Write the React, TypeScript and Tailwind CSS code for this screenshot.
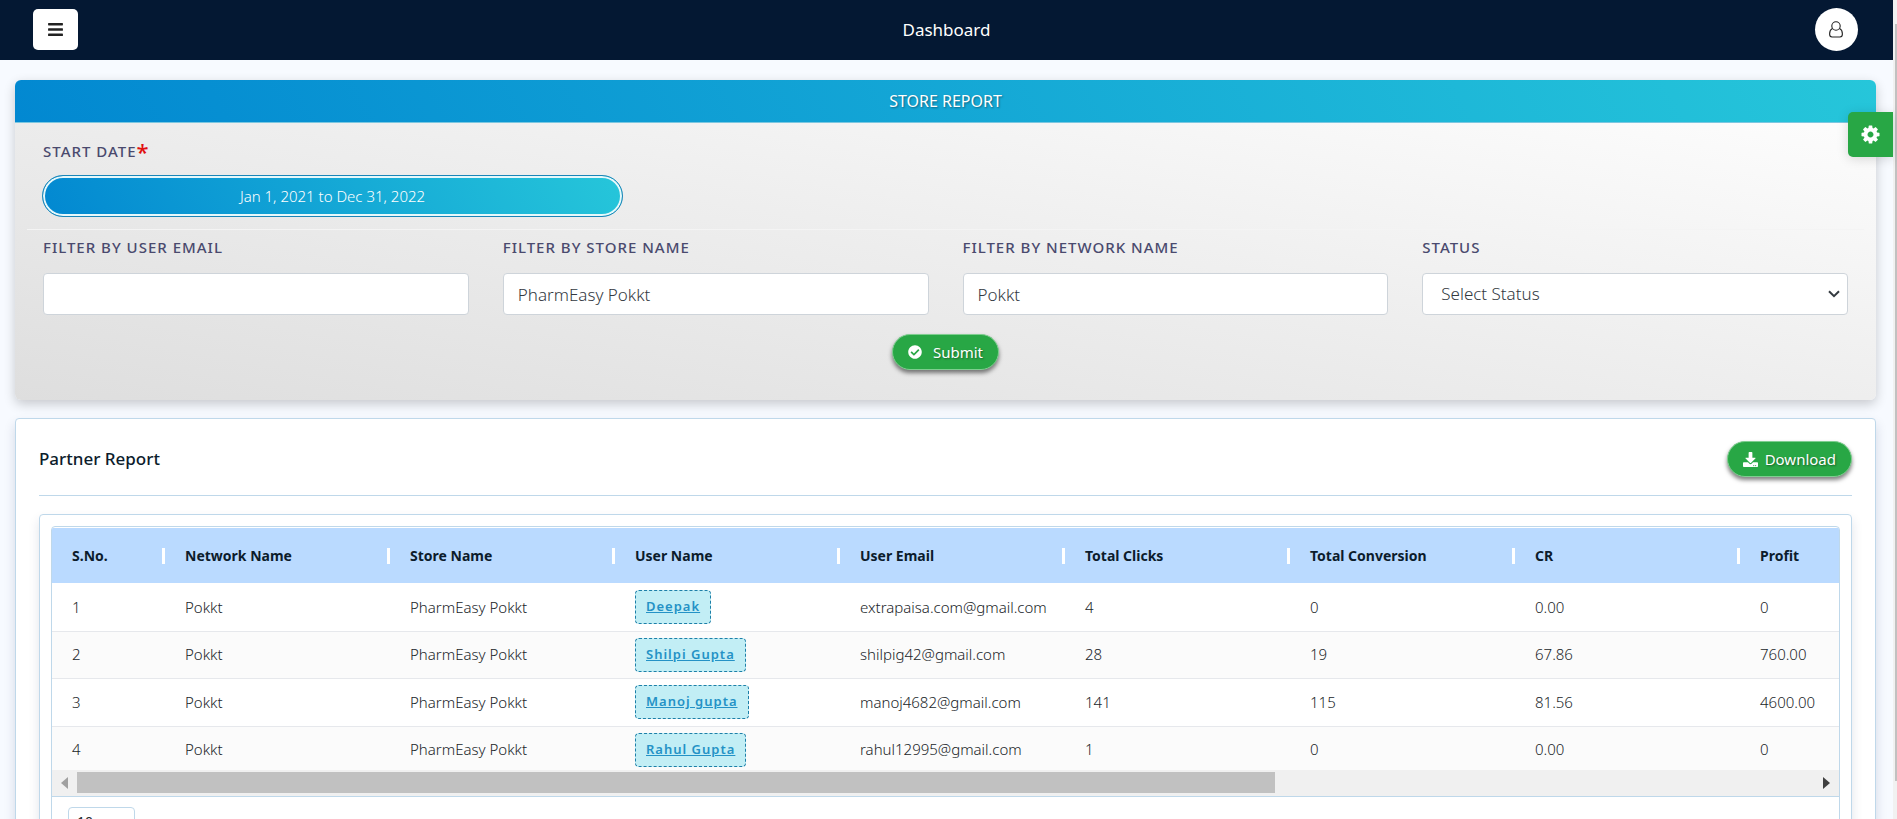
import React from "react";
import { FaBars, FaCheckCircle, FaDownload } from "react-icons/fa";

const label = "flex items-center h-6 text-[15px] font-medium tracking-[1px] uppercase text-[#4a4a6e]";
const field =
  "block w-full h-[42px] rounded border border-[#ced4da] bg-white px-[14px] text-[17px] font-light text-[#33393f] outline-none";
const greenButton =
  "flex items-center h-9 rounded-full border border-[#7fce90] bg-[#28a745] text-[15px] text-white shadow-[0_3px_4px_rgba(0,0,0,0.5)] [text-shadow:1px_1px_2px_rgba(0,0,0,0.4)]";

const columns = [
  "S.No.",
  "Network Name",
  "Store Name",
  "User Name",
  "User Email",
  "Total Clicks",
  "Total Conversion",
  "CR",
  "Profit",
];

const rows = [
  ["1", "Pokkt", "PharmEasy Pokkt", "Deepak", "extrapaisa.com@gmail.com", "4", "0", "0.00", "0"],
  ["2", "Pokkt", "PharmEasy Pokkt", "Shilpi Gupta", "shilpig42@gmail.com", "28", "19", "67.86", "760.00"],
  ["3", "Pokkt", "PharmEasy Pokkt", "Manoj gupta", "manoj4682@gmail.com", "141", "115", "81.56", "4600.00"],
  ["4", "Pokkt", "PharmEasy Pokkt", "Rahul Gupta", "rahul12995@gmail.com", "1", "0", "0.00", "0"],
];

function UserIcon() {
  return (
    <svg width="14" height="17" viewBox="0 0 14 17" fill="none" stroke="#222" strokeWidth="1.1">
      <circle cx="7" cy="5" r="4.2" />
      <path d="M3.4 7.6C1.4 8.6.6 10.8.6 13c0 2 .9 3 2.4 3h8c1.500 0 2.400-1 2.400-3 0-2.200-.8-4.400-2.800-5.400" />
    </svg>
  );
}

function GearIcon() {
  return (
    <svg width="21" height="21" viewBox="0 0 1792 1792" fill="currentColor">
      <path d="M1152 896q0-106-75-181t-181-75-181 75-75 181 75 181 181 75 181-75 75-181zm512-109v222q0 12-8 23t-20 13l-185 28q-19 54-39 91 35 50 107 138 10 12 10 25t-9 23q-27 37-99 108t-94 71q-12 0-26-9l-138-108q-44 23-91 38-16 136-29 186-7 28-36 28h-222q-14 0-24.500-8.500t-11.500-21.500l-28-184q-49-16-90-37l-141 107q-10 9-25 9-14 0-25-11-126-114-165-168-7-10-7-23 0-12 8-23 15-21 51-66.500t54-70.500q-27-50-41-99l-183-27q-13-2-21-12.500t-8-23.500v-222q0-12 8-23t19-13l186-28q14-46 39-92-40-57-107-138-10-12-10-24 0-10 9-23 26-36 98.500-107.500t94.500-71.500q13 0 26 10l138 107q44-23 91-38 16-136 29-186 7-28 36-28h222q14 0 24.500 8.500t11.500 21.500l28 184q49 16 90 37l142-107q9-9 24-9 13 0 25 10 129 119 165 170 7 8 7 22 0 12-8 23-15 21-51 66.500t-54 70.500q26 50 41 98l183 28q13 2 21 12.500t8 23.500z" />
    </svg>
  );
}

function TopBar() {
  return (
    <header className="flex h-[60px] items-center justify-between bg-[#041833] pb-px pl-[33px] pr-[35px]">
      <button
        aria-label="Toggle menu"
        className="flex h-[41px] w-[45px] items-center justify-center rounded-[5px] bg-white text-[#222]"
      >
        <FaBars size={17} />
      </button>
      <h1 className="text-[17px] text-white">Dashboard</h1>
      <button aria-label="Account" className="flex h-[43px] w-[43px] items-center justify-center rounded-full bg-white">
        <UserIcon />
      </button>
    </header>
  );
}

function Filters() {
  return (
    <section className="rounded-[6px] bg-[linear-gradient(to_top_right,#dedede_0%,#eeeeee_50%,#ffffff_100%)] shadow-[0_4px_12px_rgba(0,0,0,0.2)]">
      <h2 className="flex h-[43px] items-center justify-center rounded-t-[6px] border-b border-[#7cc7e0] bg-[linear-gradient(60deg,#0288d1,#26c6da)] text-[16px] text-white [text-shadow:1px_1px_2px_rgba(0,0,0,0.4)]">
        STORE REPORT
      </h2>
      <form className="px-7 pb-[30px] pt-4" onSubmit={(e) => e.preventDefault()}>
        <label htmlFor="range" className={label}>
          Start Date<span className="text-[22px] leading-4 text-[#e01010]">*</span>
        </label>
        <button
          id="range"
          type="button"
          className="-ml-px mt-3 block h-[42px] w-[581px] max-w-full rounded-full border border-[#1a86b8] bg-[linear-gradient(60deg,#0288d1,#26c6da)] text-[15px] font-light text-white shadow-[inset_0_0_0_2px_#e6f8fb]"
        >
          Jan 1, 2021 to Dec 31, 2022
        </button>
        <hr className="-mx-4 mt-3 border-[#f4f4f4]" />
        <div className="grid grid-cols-4 gap-x-[34px] pt-[5px]">
          <div>
            <label htmlFor="email" className={label}>Filter by User Email</label>
            <input id="email" className={`${field} mt-[14px]`} />
          </div>
          <div>
            <label htmlFor="store" className={label}>Filter by Store Name</label>
            <input id="store" defaultValue="PharmEasy Pokkt" className={`${field} mt-[14px]`} />
          </div>
          <div>
            <label htmlFor="network" className={label}>Filter by Network Name</label>
            <input id="network" defaultValue="Pokkt" className={`${field} mt-[14px]`} />
          </div>
          <div>
            <label htmlFor="status" className={label}>Status</label>
            <div className="relative mt-[14px]">
              <select id="status" className={`${field} appearance-none pl-[18px]`}>
                <option>Select Status</option>
              </select>
              <svg className="pointer-events-none absolute right-2 top-[17px]" width="12" height="8" viewBox="0 0 12 8" fill="none" stroke="#343a40" strokeWidth="2">
                <path d="M1 1.200l5 5 5-5" />
              </svg>
            </div>
          </div>
        </div>
        <div className="flex justify-center pt-[19px]">
          <button type="submit" className={`${greenButton} gap-[11px] px-[15px]`}>
            <FaCheckCircle size={14} />
            Submit
          </button>
        </div>
      </form>
    </section>
  );
}

function ReportTable() {
  return (
    <div className="overflow-hidden rounded-t border border-[#bfd8ea] bg-white pt-px">
      <div className="overflow-hidden">
        <table className="w-[2655px] table-fixed border-collapse text-left text-[15px] text-[#212529]">
          <colgroup>
            <col className="w-[113px]" />
            {columns.slice(1).map((c) => (
              <col key={c} className="w-[225px]" />
            ))}
            <col />
          </colgroup>
          <thead className="bg-[#badaff] text-[14px] text-[#0c1c2c]">
            <tr className="h-[55px]">
              {columns.map((c) => (
                <th key={c} className="p-0 font-bold">
                  <div className="flex items-center justify-between pl-5">
                    {c}
                    <span className="h-4 w-[3px] bg-white" />
                  </div>
                </th>
              ))}
              <th />
            </tr>
          </thead>
          <tbody>
            {rows.map((r, i) => (
              <tr
                key={r[0]}
                className={`border-b border-[#e6e8ec] font-light ${i % 2 ? "h-[47px] bg-[#fbfbfb]" : "h-12 bg-white"}`}
              >
                {r.map((v, j) => (
                  <td key={j} className="whitespace-nowrap py-0 pl-5 pr-0">
                    {j === 3 ? (
                      <a
                        href="#user"
                        className="inline-flex h-[34px] items-center rounded-[4px] border border-dashed border-[#1d7fa8] bg-[#c2eef5] px-[10px] align-middle text-[13px] font-semibold tracking-[1px] text-[#2492c6] underline"
                      >
                        {v}
                      </a>
                    ) : (
                      v
                    )}
                  </td>
                ))}
                <td />
              </tr>
            ))}
          </tbody>
        </table>
      </div>
      <div className="relative -mt-1 flex h-[27px] items-center border-b border-[#bfd8ea] bg-[#f0f0f0] px-[9px]">
        <svg width="7" height="12" viewBox="0 0 7 12"><path d="M7 0v12L0 6z" fill="#a0a0a0" /></svg>
        <div className="ml-[9px] flex-1">
          <div className="h-[21px] w-[68.600%] bg-[#c1c1c1]" />
        </div>
        <svg width="7" height="12" viewBox="0 0 7 12"><path d="M0 0v12l7-6z" fill="#404040" /></svg>
      </div>
      <div className="px-4 pt-[10px]">
        <select aria-label="Rows per page" className="h-[30px] w-[67px] appearance-none rounded border border-[#bfd8ea] bg-white pl-2 text-[14px] text-[#212529]">
          <option>10</option>
        </select>
      </div>
    </div>
  );
}

export default function App() {
  return (
    <div className="flex h-screen overflow-hidden bg-[#f7faff] font-['Noto_Sans','Open_Sans',sans-serif]">
      <div className="relative min-w-0 flex-1">
        <TopBar />
        <main className="flex flex-col gap-[18px] pb-6 pl-[15px] pr-[17px] pt-5">
          <Filters />
          <section className="rounded-[4px] border border-[#bfd8ea] bg-white px-[23px] shadow-[0_6px_12px_rgba(0,30,80,0.15)]">
            <div className="flex h-[77px] items-center justify-between border-b border-[#bfd8ea] pt-1">
              <h2 className="text-[17px] font-medium text-[#0c1c2c]">Partner Report</h2>
              <button className={`${greenButton} gap-[7px] px-[15px]`}>
                <FaDownload size={15} />
                Download
              </button>
            </div>
            <div className="mt-[18px] rounded-[4px] border border-[#bfd8ea] px-[11px] pt-[11px] shadow-[0_6px_12px_rgba(0,30,80,0.12)]">
              <ReportTable />
            </div>
          </section>
        </main>
        <button
          aria-label="Settings"
          className="absolute right-0 top-28 flex h-[45px] w-[45px] items-center justify-center rounded-l-[5px] bg-[#28a745] text-white shadow-[0_2px_12px_rgba(0,0,0,0.15)]"
        >
          <GearIcon />
        </button>
      </div>
      <div className="w-1 shrink-0 bg-[#f1f1f1] pl-[2px] pt-6">
        <div className="h-[757px] bg-[#c1c1c1]" />
      </div>
    </div>
  );
}
